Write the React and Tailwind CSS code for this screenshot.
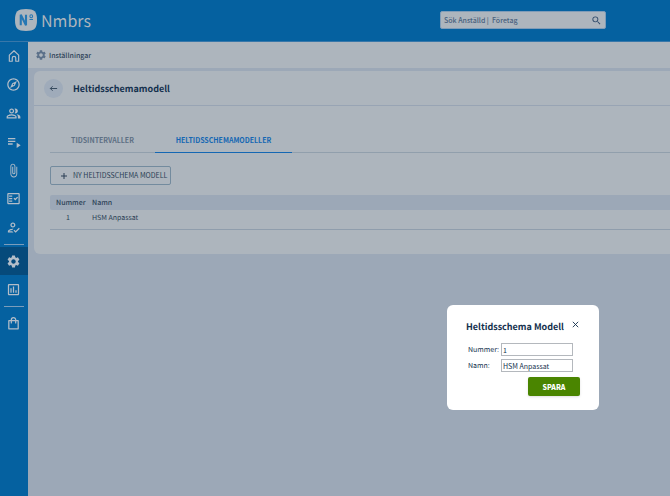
import React, { useState } from "react";
import {
  MdAttachFile,
  MdOutlineAssessment,
  MdOutlineExplore,
  MdOutlineFactCheck,
  MdOutlineHowToReg,
  MdOutlinePeopleAlt,
  MdPlaylistPlay,
  MdSearch,
  MdSettings,
} from "react-icons/md";

const HomeIcon = () => (
  <svg viewBox="0 0 24 24" className="size-[14px]" fill="none" stroke="currentColor" strokeWidth="2">
    <path d="M4 10.5 12 3l8 7.5V21h-5v-5.5a3 3 0 0 0-6 0V21H4z" strokeLinejoin="round" />
  </svg>
);

const BagIcon = () => (
  <svg viewBox="0 0 24 24" className="size-[15px]" fill="none" stroke="currentColor" strokeWidth="2">
    <path d="M4.5 7.5h15v13h-15z" strokeLinejoin="round" />
    <path d="M8.5 11V6a3.5 3.5 0 0 1 7 0v5" strokeLinecap="round" />
  </svg>
);

const mainItems = [
  { label: "Hem", icon: <HomeIcon /> },
  { label: "Utforska", icon: <MdOutlineExplore size={15} /> },
  { label: "Anställda", icon: <MdOutlinePeopleAlt size={15} /> },
  { label: "Körningar", icon: <MdPlaylistPlay size={16} /> },
  { label: "Dokument", icon: <MdAttachFile size={15} /> },
  { label: "Uppgifter", icon: <MdOutlineFactCheck size={15} /> },
  { label: "Godkännanden", icon: <MdOutlineHowToReg size={15} /> },
];

const SideButton = ({ label, active, children }) => (
  <button
    aria-label={label}
    className={`flex h-7 w-full items-center justify-center pr-px ${active ? "bg-[#064a7b]" : ""}`}
  >
    {children}
  </button>
);

const Sidebar = () => (
  <nav className="w-7 shrink-0 bg-[#0561a0] text-[#b3bdc8]">
    <div className="flex h-[199px] flex-col justify-between">
      {mainItems.map((item) => (
        <SideButton key={item.label} label={item.label}>
          {item.icon}
        </SideButton>
      ))}
    </div>
    <hr className="mx-1 mt-[3px] mb-[2px] border-[#7b9dbb]" />
    <SideButton label="Inställningar" active>
      <MdSettings size={15} />
    </SideButton>
    <SideButton label="Rapporter">
      <MdOutlineAssessment size={15} />
    </SideButton>
    <hr className="mx-1 mt-[3px] mb-[2px] border-[#7b9dbb]" />
    <SideButton label="Butik">
      <BagIcon />
    </SideButton>
  </nav>
);

const Header = () => (
  <header className="flex h-[42px] items-center justify-between border-b border-[#3877a9] bg-[#0561a0] pr-16 pb-px pl-[15px]">
    <a href="#" className="flex items-center gap-1 text-[#adb5bd]">
      <svg viewBox="0 0 21 21" className="size-[22px]">
        <path d="M10.500 0C18.500 0 21 2.500 21 10.500S18.500 21 10.500 21 0 18.500 0 10.500 2.500 0 10.500 0z" fill="#adb5bd" />
        <path d="M5.500 15.500V5.500l5 10V5.500" fill="none" stroke="#2677b3" strokeWidth="2" strokeLinejoin="bevel" />
        <ellipse cx="15.500" cy="6.900" rx="1.300" ry="1.500" fill="none" stroke="#2677b3" strokeWidth="1" />
        <path d="M13.800 10h3.400" stroke="#2677b3" strokeWidth="1" />
      </svg>
      <span className="pb-px text-[16px] leading-5">Nmbrs</span>
    </a>
    <label className="flex h-[18px] w-[166px] items-center rounded-xs border border-[#7f9cb8] bg-[#adb5bd] px-[3px] text-[#2f4a6b]">
      <input
        type="search"
        aria-label="Sök"
        placeholder="Sök Anställd |  Företag"
        className="min-w-0 flex-1 text-[7px] leading-4 font-medium outline-none placeholder:whitespace-pre placeholder:text-[#48617e]"
      />
      <MdSearch size={11} />
    </label>
  </header>
);

const ModelDialog = ({ onClose }) => (
  <form
    role="dialog"
    aria-label="Heltidsschema Modell"
    onSubmit={(e) => e.preventDefault()}
    className="absolute top-[305px] right-[71px] w-[152px] rounded-md bg-white pt-3 pr-[19px] pb-[14px] pl-[19px] text-[#14304d]"
  >
    <div className="flex items-start justify-between">
      <h2 className="mt-[3px] text-[9px] leading-[14px] font-bold whitespace-nowrap">Heltidsschema Modell</h2>
      <button type="button" aria-label="Stäng" onClick={onClose} className="flex h-[14px] items-center">
        <svg viewBox="0 0 10 10" className="size-[9px]" stroke="currentColor" strokeWidth="1">
          <path d="m2 2 6 6M8 2 2 8" />
        </svg>
      </button>
    </div>
    <div className="mt-[9px] ml-[2px] grid grid-cols-[33px_72px] gap-y-[3px] text-[7px] leading-[11px]">
      <label htmlFor="nummer" className="pt-[2px]">Nummer:</label>
      <input id="nummer" defaultValue="1" className="h-[13px] min-w-0 border border-[#b4b8bd] px-px" />
      <label htmlFor="namn" className="pt-[2px]">Namn:</label>
      <input id="namn" defaultValue="HSM Anpassat" className="h-[13px] min-w-0 border border-[#b4b8bd] px-px" />
    </div>
    <div className="mt-[5px] flex justify-end">
      <button className="h-[19px] w-[52px] rounded-xs bg-[#4a8500] text-[7px] leading-4 font-black text-white shadow-sm">
        SPARA
      </button>
    </div>
  </form>
);

const App = () => {
  const [open, setOpen] = useState(true);

  return (
    <div className="relative flex min-h-screen flex-col overflow-hidden bg-[#9ca8b7] font-['Noto_Sans_CJK_JP','Noto_Sans',sans-serif] text-[#2b3f55] [text-rendering:geometricPrecision]">
      <Header />
      <div className="flex flex-1">
        <Sidebar />
        <main className="min-w-0 flex-1">
          <div className="flex h-[26px] items-center gap-[2px] bg-[#adb5bd] pl-[7px]">
            <MdSettings size={12} className="text-[#5b7089]" />
            <span className="pt-px text-[7px] leading-4 font-medium">Inställningar</span>
          </div>

          <section className="mt-[3px] ml-[6px] rounded-l-md bg-[#adb5bd]">
            <div className="flex h-[35px] items-center gap-[10px] border-b border-[#98a4b4] pl-[10px]">
              <button aria-label="Tillbaka" className="flex size-[19px] items-center justify-center rounded-full bg-[#9fabba]">
                <svg viewBox="0 0 10 10" className="size-[9px]" fill="none" stroke="currentColor" strokeWidth="1">
                  <path d="M9 5H1.500M4 2.500 1.500 5 4 7.500" />
                </svg>
              </button>
              <h1 className="pt-px text-[9px] leading-4 font-bold text-[#14304d]">Heltidsschemamodell</h1>
            </div>

            <div className="pt-[22px] pb-6 pl-4">
              <div role="tablist" className="flex h-[25px] border-b border-[#919fac] text-[7px] font-bold">
                <button role="tab" className="w-[105px] text-[#5e7084]">TIDSINTERVALLER</button>
                <button role="tab" aria-selected="true" className="-mb-px w-[137px] border-b border-[#1467b3] text-[#1467b3]">
                  HELTIDSSCHEMAMODELLER
                </button>
              </div>

              <button className="mt-[13px] flex h-[19px] w-[121px] items-center gap-1 rounded-xs border border-[#738b9e] pl-2 text-[7px] whitespace-nowrap">
                <svg viewBox="0 0 10 10" className="size-[10px]" stroke="currentColor" strokeWidth="1">
                  <path d="M5 2v6M2 5h6" />
                </svg>
                NY HELTIDSSCHEMA MODELL
              </button>

              <table className="mt-[10px] w-full border-separate border-spacing-0 text-[7px] leading-[13px]">
                <thead>
                  <tr className="text-left">
                    <th className="w-9 rounded-l-xs bg-[#9ca8b7] p-0 pt-[2px] pl-[6px] font-medium">Nummer</th>
                    <th className="bg-[#9ca8b7] p-0 pt-[2px] pl-[6px] font-medium">Namn</th>
                  </tr>
                </thead>
                <tbody>
                  <tr>
                    <td className="border-b border-[#8f9dac] p-0 pt-[2px] pb-1 text-center">1</td>
                    <td className="border-b border-[#8f9dac] p-0 pt-[2px] pb-1 pl-[6px]">HSM Anpassat</td>
                  </tr>
                </tbody>
              </table>
            </div>
          </section>
        </main>
      </div>
      {open && <ModelDialog onClose={() => setOpen(false)} />}
    </div>
  );
};

export default App;
